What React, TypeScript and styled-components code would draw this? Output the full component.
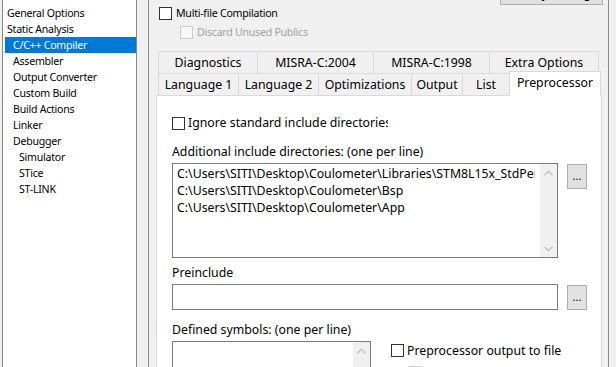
import React from 'react';
import styled, { createGlobalStyle } from 'styled-components';

const GlobalStyle = createGlobalStyle`
  html, body { margin: 0; padding: 0; background: #f0f0f0; overflow: hidden; }
  #root { width: 616px; height: 367px; overflow: hidden; }
  * { box-sizing: border-box; }
`;

const Window = styled.div`
  display: flex;
  align-items: flex-start;
  width: 616px;
  height: 367px;
  overflow: hidden;
  background: #f0f0f0;
  color: #000;
  font-family: "Noto Sans", sans-serif;
`;

const Tree = styled.ul`
  flex: none;
  list-style: none;
  margin: -1px 0 0 2px;
  padding: 5px 0 0 0;
  width: 135px;
  height: 400px;
  border: 1px solid #828790;
  background: #fff;
`;

const TreeItem = styled.li<{ $level: number; $selected?: boolean }>`
  height: 16px;
  line-height: 16px;
  margin-left: 2px;
  padding-left: ${(p) => 2 + p.$level * 6}px;
  font-size: 10.6px;
  letter-spacing: -0.25px;
  white-space: nowrap;
  background: ${(p) => (p.$selected ? '#0078d7' : 'transparent')};
  color: ${(p) => (p.$selected ? '#fff' : '#000')};
`;

const Frame = styled.div`
  flex: none;
  margin-left: 11px;
  width: 461px;
  height: 367px;
  border-left: 1px solid #8c8c8c;
  border-right: 1px solid #8c8c8c;
  display: flex;
  flex-direction: column;
`;

const Header = styled.div`
  flex: none;
  display: flex;
  justify-content: space-between;
  align-items: flex-start;
  height: 51px;
  padding: 0 5px 0 10px;
`;

const OptionColumn = styled.div`
  display: flex;
  flex-direction: column;
  gap: 3px;
  padding-top: 5px;
`;

const OptionRow = styled.div<{ $indent?: number; $disabled?: boolean }>`
  display: flex;
  align-items: center;
  gap: 4px;
  height: 16px;
  padding-left: ${(p) => p.$indent ?? 0}px;
  font-size: 10.6px;
  letter-spacing: -0.25px;
  white-space: nowrap;
  color: ${(p) => (p.$disabled ? '#a0a0a0' : '#000')};
`;

const Check = styled.span<{ $disabled?: boolean }>`
  flex: none;
  display: block;
  width: 13px;
  height: 13px;
  border: 1px solid ${(p) => (p.$disabled ? '#cccccc' : '#333333')};
  background: ${(p) => (p.$disabled ? '#f7f7f7' : '#ffffff')};
`;

const TopButton = styled.div`
  flex: none;
  width: 103px;
  height: 23px;
  margin-top: -18px;
  display: flex;
  align-items: center;
  justify-content: center;
  background: #e1e1e1;
  border: 1px solid #adadad;
  font-size: 12px;
`;

const TabArea = styled.div`
  margin-left: 7px;
  width: 446px;
  display: flex;
  flex-direction: column;
`;

const TabRow = styled.div`
  display: flex;
  margin-left: 2px;
`;

const FrontTabRow = styled(TabRow)`
  height: 25px;
  align-items: flex-end;
  margin-top: -3px;
`;

const Tab = styled.div<{ $w: number; $selected?: boolean }>`
  flex: none;
  width: ${(p) => p.$w}px;
  height: ${(p) => (p.$selected ? 25 : 23)}px;
  display: flex;
  align-items: center;
  justify-content: center;
  padding-bottom: ${(p) => (p.$selected ? 2 : 0)}px;
  border: 1px solid #d9d9d9;
  border-bottom-color: ${(p) => (p.$selected ? '#ffffff' : '#d9d9d9')};
  background: ${(p) => (p.$selected ? '#ffffff' : '#f0f0f0')};
  position: ${(p) => (p.$selected ? 'relative' : 'static')};
  z-index: ${(p) => (p.$selected ? 1 : 'auto')};
  font-size: 12.3px;
  white-space: nowrap;
  & + & { margin-left: -1px; }
`;

const Panel = styled.div`
  margin-top: -1px;
  width: 446px;
  height: 300px;
  border: 1px solid #d9d9d9;
  background: #fff;
  padding-left: 15px;
  font-size: 12.3px;
  display: flex;
  flex-direction: column;
  align-items: flex-start;
`;

const PanelCheck = styled.div<{ $mt?: number; $indent?: number; $disabled?: boolean }>`
  display: flex;
  align-items: center;
  gap: 3px;
  height: 16px;
  margin-top: ${(p) => p.$mt ?? 0}px;
  padding-left: ${(p) => p.$indent ?? 0}px;
  white-space: nowrap;
  color: ${(p) => (p.$disabled ? '#a0a0a0' : '#000')};
`;

const ClipLabel = styled.span<{ $w: number }>`
  display: block;
  width: ${(p) => p.$w}px;
  overflow: hidden;
  line-height: 16px;
`;

const FieldLabel = styled.div<{ $mt: number }>`
  margin-top: ${(p) => p.$mt}px;
  line-height: 16px;
  height: 16px;
  white-space: nowrap;
`;

const EditRow = styled.div`
  display: flex;
  align-items: flex-start;
  gap: 9px;
  margin-top: 3px;
`;

const ListBox = styled.div<{ $w: number; $h: number }>`
  flex: none;
  display: flex;
  width: ${(p) => p.$w}px;
  height: ${(p) => p.$h}px;
  border: 1px solid #7a7a7a;
  background: #fff;
`;

const ListLines = styled.div`
  flex: 1;
  min-width: 0;
  margin-right: 5px;
  padding: 1px 0 0 4px;
  overflow: hidden;
  white-space: nowrap;
  line-height: 17px;
`;

const ScrollBar = styled.div`
  flex: none;
  width: 17px;
  background: #f0f0f0;
  display: flex;
  flex-direction: column;
  justify-content: space-between;
`;

const ScrollArrow = styled.div`
  height: 17px;
  display: flex;
  align-items: center;
  justify-content: center;
`;

const TextInput = styled.div`
  flex: none;
  width: 386px;
  height: 26px;
  border: 1px solid #7a7a7a;
  background: #fff;
`;

const BrowseButton = styled.div`
  flex: none;
  width: 20px;
  height: 25px;
  margin-top: 1px;
  display: flex;
  align-items: center;
  justify-content: center;
  padding-bottom: 3px;
  background: #e1e1e1;
  border: 1px solid #adadad;
  font-size: 11px;
`;

const BottomRow = styled.div`
  display: flex;
  align-items: flex-start;
  margin-top: 3px;
`;

const SideOptions = styled.div`
  display: flex;
  flex-direction: column;
  margin: 1px 0 0 20px;
`;

const Chevron = ({ down }: { down?: boolean }) => (
  <svg width="9" height="6" viewBox="0 0 9 6">
    <polyline
      points={down ? '0.5,0.8 4.5,4.8 8.5,0.8' : '0.5,5.2 4.5,1.2 8.5,5.2'}
      fill="none"
      stroke="#c2c2c2"
      strokeWidth="1.3"
    />
  </svg>
);

const VScroll = ({ bottom = true }: { bottom?: boolean }) => (
  <ScrollBar>
    <ScrollArrow>
      <Chevron />
    </ScrollArrow>
    {bottom && (
      <ScrollArrow>
        <Chevron down />
      </ScrollArrow>
    )}
  </ScrollBar>
);

const treeItems = [
  { label: 'General Options', level: 0 },
  { label: 'Static Analysis', level: 0 },
  { label: 'C/C++ Compiler', level: 1, selected: true },
  { label: 'Assembler', level: 1 },
  { label: 'Output Converter', level: 1 },
  { label: 'Custom Build', level: 1 },
  { label: 'Build Actions', level: 1 },
  { label: 'Linker', level: 1 },
  { label: 'Debugger', level: 1 },
  { label: 'Simulator', level: 2 },
  { label: 'STice', level: 2 },
  { label: 'ST-LINK', level: 2 },
];

const backTabs: [string, number][] = [
  ['Diagnostics', 100],
  ['MISRA-C:2004', 117],
  ['MISRA-C:1998', 117],
  ['Extra Options', 110],
];

const frontTabs: [string, number][] = [
  ['Language 1', 81],
  ['Language 2', 81],
  ['Optimizations', 94],
  ['Output', 52],
  ['List', 48],
  ['Preprocessor', 92],
];

const includeDirs = [
  'C:\\Users\\SITI\\Desktop\\Coulometer\\Libraries\\STM8L15x_StdPeriph_Driver\\inc',
  'C:\\Users\\SITI\\Desktop\\Coulometer\\Bsp',
  'C:\\Users\\SITI\\Desktop\\Coulometer\\App',
];

export default function App() {
  return (
    <>
      <GlobalStyle />
      <Window>
        <Tree>
          {treeItems.map((it) => (
            <TreeItem key={it.label} $level={it.level} $selected={it.selected}>
              {it.label}
            </TreeItem>
          ))}
        </Tree>
        <Frame>
          <Header>
            <OptionColumn>
              <OptionRow>
                <Check />
                Multi-file Compilation
              </OptionRow>
              <OptionRow $indent={21} $disabled>
                <Check $disabled />
                Discard Unused Publics
              </OptionRow>
            </OptionColumn>
            <TopButton>Factory Settings</TopButton>
          </Header>
          <TabArea>
            <TabRow>
              {backTabs.map(([t, w]) => (
                <Tab key={t} $w={w}>
                  {t}
                </Tab>
              ))}
            </TabRow>
            <FrontTabRow>
              {frontTabs.map(([t, w]) => (
                <Tab key={t} $w={w} $selected={t === 'Preprocessor'}>
                  {t}
                </Tab>
              ))}
            </FrontTabRow>
            <Panel>
              <PanelCheck $mt={19}>
                <Check />
                <ClipLabel $w={200}>Ignore standard include directories</ClipLabel>
              </PanelCheck>
              <FieldLabel $mt={13}>Additional include directories: (one per line)</FieldLabel>
              <EditRow>
                <ListBox $w={386} $h={95}>
                  <ListLines>
                    {includeDirs.map((d) => (
                      <div key={d}>{d}</div>
                    ))}
                  </ListLines>
                  <VScroll />
                </ListBox>
                <BrowseButton>...</BrowseButton>
              </EditRow>
              <FieldLabel $mt={7}>Preinclude</FieldLabel>
              <EditRow>
                <TextInput />
                <BrowseButton>...</BrowseButton>
              </EditRow>
              <FieldLabel $mt={12}>Defined symbols: (one per line)</FieldLabel>
              <BottomRow>
                <ListBox $w={199} $h={80}>
                  <ListLines />
                  <VScroll bottom={false} />
                </ListBox>
                <SideOptions>
                  <PanelCheck>
                    <Check />
                    Preprocessor output to file
                  </PanelCheck>
                  <PanelCheck $mt={6} $indent={18} $disabled>
                    <Check $disabled />
                    Preserve comments
                  </PanelCheck>
                </SideOptions>
              </BottomRow>
            </Panel>
          </TabArea>
        </Frame>
      </Window>
    </>
  );
}
